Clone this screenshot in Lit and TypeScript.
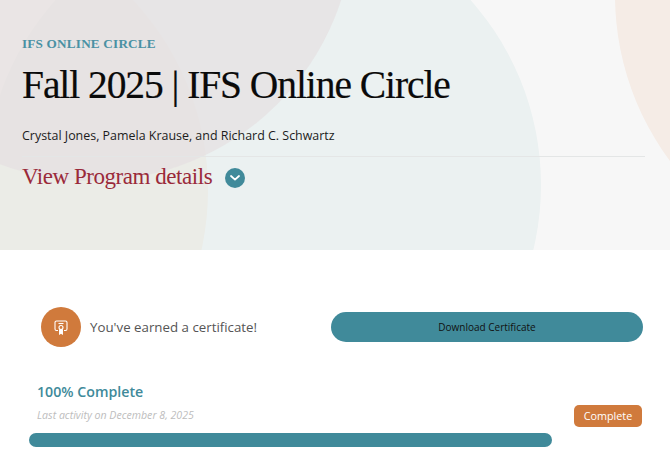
import { LitElement, html, css } from "lit";
import { customElement } from "lit/decorators.js";

@customElement("app-root")
export class AppRoot extends LitElement {
  static styles = css`
    :host { display: block; width: 670px; height: 467px; overflow: hidden; background: #fff; font-family: "Open Sans", sans-serif; }
    .hero { position: relative; height: 250px; box-sizing: border-box; padding: 36px 25px 0 22px; overflow: hidden; isolation: isolate; }
    .bg { position: absolute; inset: 0; width: 670px; height: 250px; z-index: -1; }
    .bg .mul { mix-blend-mode: multiply; }
    .eyebrow { font: bold 13.2px/15px "Liberation Serif", serif; letter-spacing: 0.2px; color: #4a91a3; text-transform: uppercase; }
    h1 { margin: 9px 0 0; font: 400 39.5px/50px "Liberation Serif", serif; color: #0a0a0a; letter-spacing: -1.07px; -webkit-text-stroke: 0.2px #0a0a0a; }
    .authors { margin-top: 17px; font-size: 12.45px; line-height: 18px; color: #1c1c1c; }
    .details { margin-top: 11px; border-top: 1px solid #e4e6e6; padding-top: 5px; display: flex; align-items: center; gap: 13px; }
    .details span { font: 400 23px/30px "Liberation Serif", serif; letter-spacing: -0.45px; color: #9a2a3a; }
    .chev { width: 20px; height: 20px; border-radius: 50%; background: #408a9a; display: flex; align-items: center; justify-content: center; margin-top: 2px; }
    .main { padding: 57px 27px 0 29px; }
    .cert { display: flex; align-items: center; justify-content: space-between; padding-left: 12px; }
    .cert-left { display: flex; align-items: center; gap: 9px; }
    .cert-icon { width: 40px; height: 40px; border-radius: 50%; background: #d07a3c; display: flex; align-items: center; justify-content: center; }
    .cert-text { font-size: 13.3px; color: #555; }
    .download { width: 312px; height: 30px; border-radius: 15px; background: #408a9a; font-size: 10px; color: #111; display: flex; align-items: center; justify-content: center; }
    .progress { margin-top: 35px; display: flex; justify-content: space-between; align-items: flex-end; padding-left: 8px; }
    .pct { font-size: 14.2px; font-weight: 600; line-height: 20px; color: #408a9a; }
    .last { margin: 6px 0 5px; font-size: 10.6px; line-height: 14px; font-style: italic; color: #bdbdbd; }
    .badge { width: 68px; height: 22px; margin-right: 1px; border-radius: 5px; background: #d07a3c; color: #fff; font-size: 10.8px; display: flex; align-items: center; justify-content: center; padding-bottom: 2px; box-sizing: border-box; }
    .bar { margin-top: 6px; width: 523px; height: 14px; border-radius: 7px; background: #408a9a; }
  `;

  render() {
    return html`
      <section class="hero">
        <svg class="bg" viewBox="0 0 670 250" aria-hidden="true">
          <rect width="670" height="250" fill="#f7f7f7" />
          <circle class="mul" cx="893" cy="-5" r="278" fill="#fdf4ee" />
          <circle class="mul" cx="263" cy="185" r="278" fill="#f3f9f9" />
          <circle class="mul" cx="-70" cy="190" r="278" fill="#fffaf5" />
          <circle cx="92" cy="-81" r="262" fill="#e6e0e1" fill-opacity="0.75" />
        </svg>
        <div class="eyebrow">IFS Online Circle</div>
        <h1>Fall 2025 | IFS Online Circle</h1>
        <div class="authors">Crystal Jones, Pamela Krause, and Richard C. Schwartz</div>
        <div class="details">
          <span>View Program details</span>
          <div class="chev">
            <svg width="10" height="6" viewBox="0 0 10 6"><path d="M1 1l4 3.6L9 1" fill="none" stroke="#fff" stroke-width="1.8" stroke-linecap="round" stroke-linejoin="round" /></svg>
          </div>
        </div>
      </section>
      <section class="main">
        <div class="cert">
          <div class="cert-left">
            <div class="cert-icon">
              <svg width="14" height="15" viewBox="0 0 14 15" fill="none" stroke="#fff" stroke-width="1.1">
                <path d="M4 10.5H2.5A1.5 1.5 0 0 1 1 9V2.5A1.5 1.5 0 0 1 2.5 1h9A1.5 1.5 0 0 1 13 2.5V9a1.5 1.5 0 0 1-1.5 1.5H10" />
                <path d="M4.5 3.5h5" />
                <circle cx="7" cy="7.5" r="2" />
                <path d="M5.6 9.5V14L7 13l1.4 1V9.5" fill="#fff" />
              </svg>
            </div>
            <span class="cert-text">You've earned a certificate!</span>
          </div>
          <div class="download">Download Certificate</div>
        </div>
        <div class="progress">
          <div>
            <div class="pct">100% Complete</div>
            <div class="last">Last activity on December 8, 2025</div>
          </div>
          <div class="badge">Complete</div>
        </div>
        <div class="bar"></div>
      </section>
    `;
  }
}
